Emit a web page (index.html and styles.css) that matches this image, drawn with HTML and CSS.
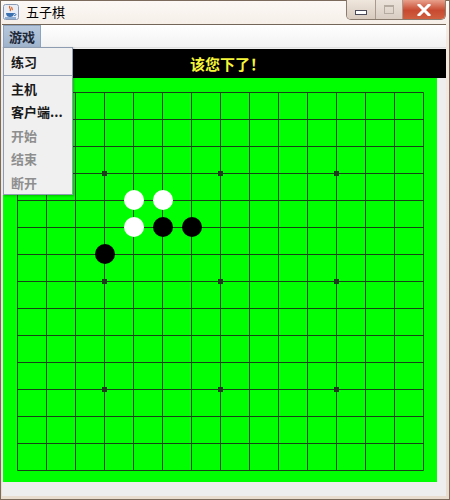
FILE: index.html
```html
<!DOCTYPE html>
<html>
<head>
<meta charset="utf-8">
<link rel="stylesheet" href="styles.css">
</head>
<body>
<div class="window">
  <div class="titlebar">
    <svg class="app-icon" width="16" height="16" viewBox="0 0 16 16">
      <rect x="0.5" y="0.5" width="15" height="15" rx="2" fill="#e9eef6" stroke="#8a9ab4"/>
      <path d="M7 2 C5 4 9 5 7 7 M9 3 C8 4 10 5 9 6" stroke="#e05a10" stroke-width="1.2" fill="none"/>
      <path d="M3 9 H11 C11 12 9 13 7 13 C5 13 3 12 3 9 Z" fill="#3a6fb0"/>
      <path d="M11 9.5 C13.5 9.5 13.5 12 11 11.5" stroke="#3a6fb0" fill="none"/>
      <path d="M2 14 H13" stroke="#3a6fb0"/>
    </svg>
    <span class="title">五子棋</span>
    <div class="controls">
      <div class="btn btn-min"><span class="min-glyph"></span></div>
      <div class="btn btn-max"><span class="max-glyph"></span></div>
      <div class="btn btn-close"><svg width="14" height="12" viewBox="0 0 14 12"><path d="M2 1 L12 11 M12 1 L2 11" stroke="#fff" stroke-width="3" stroke-linecap="square"/></svg></div>
    </div>
  </div>
  <div class="client">
    <div class="menubar">
      <div class="menu-item active">游戏</div>
    </div>
    <div class="content">
      <div class="status">该您下了！</div>
      <div class="board-row">
        <svg class="board" width="434" height="404" viewBox="0 0 434 404">
          <rect width="434" height="404" fill="#00ff00"/>
          <g stroke="#174417" stroke-width="1">
            <path d="M14.5 14.5 H420.5 M14.5 41.5 H420.5 M14.5 68.5 H420.5 M14.5 95.5 H420.5 M14.5 122.5 H420.5 M14.5 149.5 H420.5 M14.5 176.5 H420.5 M14.5 203.5 H420.5 M14.5 230.5 H420.5 M14.5 257.5 H420.5 M14.5 284.5 H420.5 M14.5 311.5 H420.5 M14.5 338.5 H420.5 M14.5 365.5 H420.5 M14.5 392.5 H420.5"/>
            <path d="M14.5 14.5 V392.5 M43.5 14.5 V392.5 M72.5 14.5 V392.5 M101.5 14.5 V392.5 M130.5 14.5 V392.5 M159.5 14.5 V392.5 M188.5 14.5 V392.5 M217.5 14.5 V392.5 M246.5 14.5 V392.5 M275.5 14.5 V392.5 M304.5 14.5 V392.5 M333.5 14.5 V392.5 M362.5 14.5 V392.5 M391.5 14.5 V392.5 M420.5 14.5 V392.5"/>
          </g>
          <g fill="#1f3a1f">
            <rect x="99" y="93" width="5" height="5"/>
            <rect x="215" y="93" width="5" height="5"/>
            <rect x="331" y="93" width="5" height="5"/>
            <rect x="99" y="201" width="5" height="5"/>
            <rect x="215" y="201" width="5" height="5"/>
            <rect x="331" y="201" width="5" height="5"/>
            <rect x="99" y="309" width="5" height="5"/>
            <rect x="215" y="309" width="5" height="5"/>
            <rect x="331" y="309" width="5" height="5"/>
          </g>
          <g fill="#ffffff">
            <circle cx="131" cy="122" r="10"/>
            <circle cx="160" cy="122" r="10"/>
            <circle cx="131" cy="149" r="10"/>
          </g>
          <g fill="#000000">
            <circle cx="160" cy="149" r="10"/>
            <circle cx="189" cy="149" r="10"/>
            <circle cx="102" cy="176" r="10"/>
          </g>
        </svg>
      </div>
    </div>
  </div>
  <div class="dropdown">
    <div class="dd-item">练习</div>
    <div class="dd-sep"></div>
    <div class="dd-item">主机</div>
    <div class="dd-item">客户端...</div>
    <div class="dd-item disabled">开始</div>
    <div class="dd-item disabled">结束</div>
    <div class="dd-item disabled">断开</div>
  </div>
</div>
</body>
</html>
```
FILE: styles.css
```css
html, body {
  margin: 0;
  padding: 0;
  background: #ffffff;
}
body {
  width: 450px;
  height: 500px;
  overflow: hidden;
  font-family: "Noto Sans CJK SC", "Liberation Sans", sans-serif;
}
.window {
  position: relative;
  width: 450px;
  height: 500px;
  box-sizing: border-box;
  background: linear-gradient(#fbf8f5, #f3e9df 40px, #e9ddd0);
  border: 1px solid #7b6b5d;
  display: flex;
  flex-direction: column;
}
.titlebar {
  height: 23px;
  display: flex;
  align-items: flex-start;
  padding-left: 2px;
}
.app-icon {
  margin-top: 3px;
}
.title {
  margin-left: 7px;
  margin-top: 2px;
  font-size: 13px;
  line-height: 17px;
  color: #000;
}
.controls {
  margin-left: auto;
  margin-right: 3px;
  margin-top: -1px;
  display: flex;
  height: 19px;
  border: 1px solid #8a7d70;
  border-top: none;
  border-radius: 0 0 5px 5px;
  overflow: hidden;
}
.btn {
  height: 19px;
  display: flex;
  align-items: center;
  justify-content: center;
}
.btn-min {
  width: 28px;
  background: linear-gradient(#efe6dd, #d8cabd);
  border-right: 1px solid #a89a8c;
}
.btn-max {
  width: 26px;
  background: linear-gradient(#ece4dc, #d9cdc2);
  border-right: 1px solid #a89a8c;
}
.btn-close {
  width: 42px;
  background: linear-gradient(#e8a08c, #c84a30 55%, #d06040);
}
.min-glyph {
  width: 10px;
  height: 3px;
  margin-top: 5px;
  background: #fff;
  border: 1px solid #4a4a5a;
}
.max-glyph {
  width: 8px;
  height: 6px;
  border: 1px solid #b5aba0;
  border-top-width: 2px;
}
.client {
  flex: 1;
  margin: 0 3px 3px 1px;
  border-top: 1px solid #75665a;
  display: flex;
  flex-direction: column;
  background: #eeeeee;
}
.menubar {
  height: 22px;
  background: linear-gradient(#ffffff, #f2f2f2);
  border-bottom: 1px solid #e0e0e0;
  display: flex;
  padding-left: 1px;
}
.menu-item {
  padding: 0 5px 0 5px;
  font-size: 13px;
  line-height: 21px;
  font-weight: bold;
  color: #1e2838;
}
.menu-item.active {
  background: linear-gradient(#b6c7dc, #9fb4cc);
  border: 1px solid #8ea3bd;
  border-bottom: none;
}
.content {
  flex: 1;
  display: flex;
  flex-direction: column;
  padding: 1px 0 0 1px;
}
.status {
  height: 29px;
  background: #000;
  color: #f5f53a;
  font-size: 15px;
  font-weight: bold;
  line-height: 29px;
  text-align: center;
  padding-left: 6px;
}
.board-row {
  display: flex;
}
.board {
  display: block;
}
.dropdown {
  position: absolute;
  left: 2px;
  top: 46px;
  width: 70px;
  height: 148px;
  box-sizing: border-box;
  background: #f0f0f0;
  border: 1px solid #8e9cb2;
  padding-top: 2px;
  box-shadow: 1px 1px 2px rgba(0,0,0,0.25);
}
.dd-item {
  height: 23.5px;
  line-height: 23px;
  font-size: 13px;
  font-weight: bold;
  color: #1a1a1a;
  padding-left: 7px;
  white-space: nowrap;
}
.dd-item.disabled {
  color: #8e8e8e;
}
.dd-sep {
  height: 1px;
  background: #9aa6b8;
  margin: 1px 0 1px 0;
}
```
